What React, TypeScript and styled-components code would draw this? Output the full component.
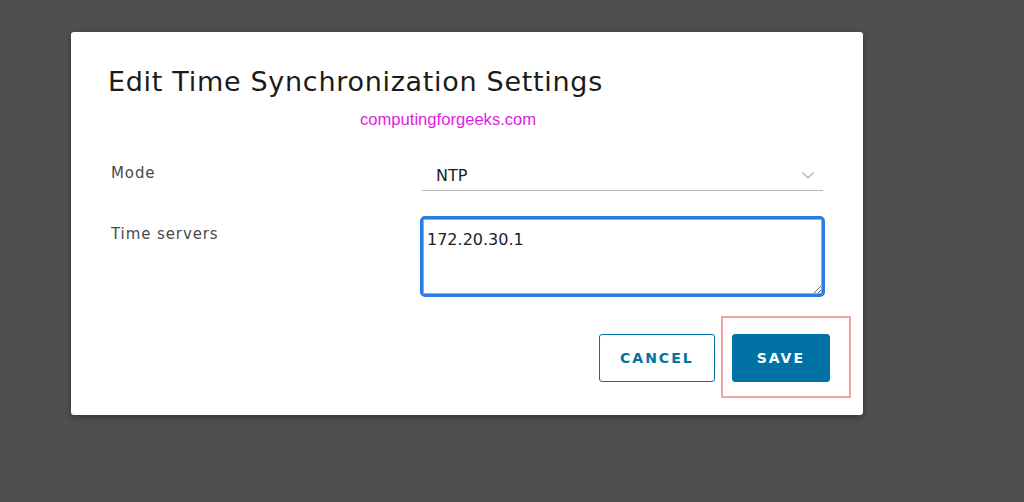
import * as React from "react";
import styled, { createGlobalStyle } from "styled-components";

const GlobalStyle = createGlobalStyle`
  html, body {
    margin: 0;
    padding: 0;
    background-color: #4f4f4f;
  }
  body {
    font-family: "DejaVu Sans", "Open Sans", sans-serif;
  }
`;

const Page = styled.div`
  width: 1024px;
  height: 502px;
  padding: 32px 0 0 71px;
  box-sizing: border-box;
  overflow: hidden;
`;

const Modal = styled.section`
  width: 792px;
  height: 383px;
  box-sizing: border-box;
  padding: 32px 38px 0 37px;
  background-color: #ffffff;
  border-radius: 3px;
  box-shadow: 0 2px 6px rgba(0, 0, 0, 0.35);
`;

const Title = styled.h1`
  margin: 0;
  font-size: 27px;
  line-height: 36px;
  font-weight: 400;
  color: #1b1b1b;
  letter-spacing: 0.7px;
`;

const Watermark = styled.div`
  margin: 10px 0 0 252px;
  font-family: "Liberation Sans", Arial, sans-serif;
  font-size: 16.6px;
  line-height: 20px;
  color: #e01ee0;
`;

const Form = styled.div`
  display: grid;
  grid-template-columns: 309px 405px;
  row-gap: 25px;
  margin-top: 30px;
  padding-left: 3px;
`;

const Label = styled.label<{ $top: number }>`
  font-size: 15px;
  line-height: 20px;
  letter-spacing: 0.9px;
  color: #4a4a4a;
  padding-top: ${(p) => p.$top}px;
`;

const Select = styled.div`
  height: 31px;
  box-sizing: border-box;
  margin: 0 2px;
  border-bottom: 1px solid #b8b8b8;
  display: flex;
  align-items: center;
  justify-content: space-between;
  padding: 0 9px 0 14px;
  font-size: 16px;
  color: #1d1d1d;
`;

const Chevron = styled.svg`
  width: 12px;
  height: 7px;
  margin-top: 1px;
`;

const TextArea = styled.textarea`
  width: 405px;
  height: 81px;
  box-sizing: border-box;
  margin: 0;
  padding: 11px 4px 9px;
  border: 3px solid #2b7de4;
  border-radius: 5px;
  outline: none;
  box-shadow: inset 0 0 0 1px #a9a9a9;
  font-family: "DejaVu Sans", "Open Sans", sans-serif;
  font-size: 16px;
  line-height: 20px;
  color: #1d1d1d;
  resize: vertical;
`;

const Actions = styled.div`
  display: flex;
  justify-content: flex-end;
  align-items: center;
  gap: 17px;
  margin-top: 37px;
  margin-right: -5px;
`;

const Button = styled.button<{ $primary?: boolean }>`
  height: 48px;
  box-sizing: border-box;
  padding: 0 ${(p) => (p.$primary ? 24 : 20)}px;
  border-radius: 3px;
  border: 1px solid #0072a3;
  background-color: ${(p) => (p.$primary ? "#0072a3" : "#ffffff")};
  color: ${(p) => (p.$primary ? "#ffffff" : "#0072a3")};
  font-family: "DejaVu Sans", "Open Sans", sans-serif;
  font-size: 14px;
  font-weight: 600;
  letter-spacing: 2px;
  cursor: pointer;
`;

const Highlight = styled.span`
  position: relative;
  display: inline-flex;

  &::after {
    content: "";
    position: absolute;
    left: -11px;
    right: -21px;
    top: -18px;
    bottom: -16px;
    border: 2px solid #f4a3a3;
    pointer-events: none;
  }
`;

export default function App() {
  return (
    <Page>
      <GlobalStyle />
      <Modal>
        <Title>Edit Time Synchronization Settings</Title>
        <Watermark>computingforgeeks.com</Watermark>
        <Form>
          <Label $top={3}>Mode</Label>
          <Select>
            <span>NTP</span>
            <Chevron viewBox="0 0 12 7" fill="none" stroke="#a8a8a8" strokeWidth="1.2">
              <polyline points="0.5,0.5 6,6 11.5,0.5" />
            </Chevron>
          </Select>
          <Label $top={8}>Time servers</Label>
          <TextArea defaultValue="172.20.30.1" />
        </Form>
        <Actions>
          <Button>CANCEL</Button>
          <Highlight>
            <Button $primary>SAVE</Button>
          </Highlight>
        </Actions>
      </Modal>
    </Page>
  );
}
